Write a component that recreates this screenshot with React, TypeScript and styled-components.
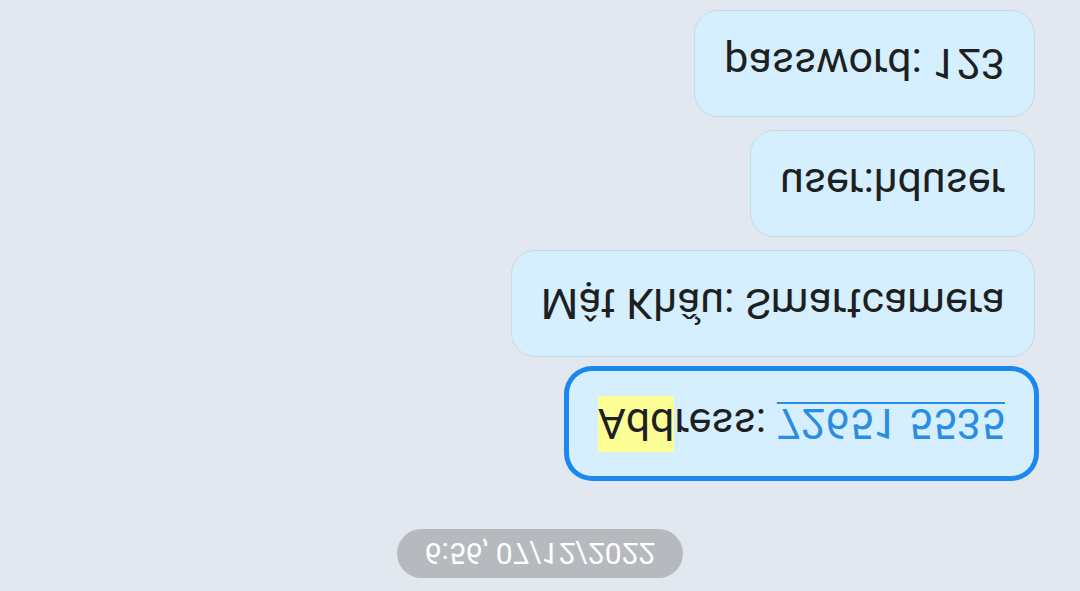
import React from "react";
import styled, { createGlobalStyle } from "styled-components";

const GlobalStyle = createGlobalStyle`
  html, body {
    margin: 0;
    padding: 0;
    background: #e2e8f0;
    overflow: hidden;
  }
  * { box-sizing: border-box; }
`;

const Screen = styled.div`
  width: 1080px;
  height: 591px;
  background: #e2e8f0;
  display: flex;
  flex-direction: column;
  align-items: center;
  padding: 13px 0 11px 0;
  transform: scaleY(-1);
  font-family: Roboto, "Noto Sans", "Liberation Sans", sans-serif;
`;

const Stamp = styled.div`
  height: 49px;
  padding: 0 28px;
  margin-bottom: 52px;
  border-radius: 25px;
  background: #b6babf;
  color: #ffffff;
  font-size: 30px;
  line-height: 49px;
  white-space: nowrap;
`;

const Thread = styled.div`
  align-self: stretch;
  display: flex;
  flex-direction: column;
  align-items: flex-end;
  gap: 13px;
  padding-right: 45px;
`;

const Bubble = styled.div<{ $selected?: boolean }>`
  background: #d5efff;
  border: 1px solid ${(p) => (p.$selected ? "#1a88ee" : "#c6dbe8")};
  border-radius: 24px;
  padding: 27px 29px;
  font-size: 43px;
  line-height: 51px;
  color: #1e1f21;
  white-space: nowrap;
  box-shadow: ${(p) => (p.$selected ? "0 0 0 4px #1a88ee" : "none")};
`;

const Mark = styled.span`
  background: #fdfd96;
  padding: 3px 0 3px;
`;

const Link = styled.span`
  color: #2a8de2;
  text-decoration: underline;
  text-decoration-thickness: 2px;
  text-underline-offset: 5px;
`;

export default function App() {
  return (
    <>
      <GlobalStyle />
      <Screen>
        <Stamp>6:56, 07/12/2022</Stamp>
        <Thread>
          <Bubble $selected>
            <Mark>Add</Mark>ress: <Link>72651 5535</Link>
          </Bubble>
          <Bubble>Mật Khẩu: Smartcamera</Bubble>
          <Bubble>user:hduser</Bubble>
          <Bubble>password: 123</Bubble>
        </Thread>
      </Screen>
    </>
  );
}
